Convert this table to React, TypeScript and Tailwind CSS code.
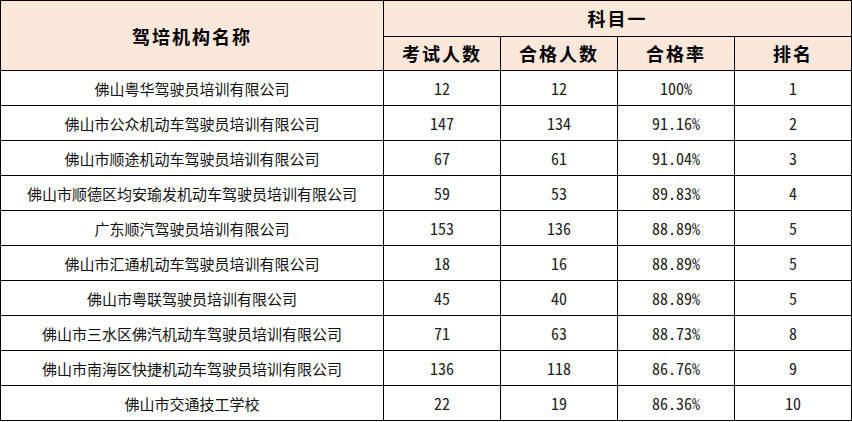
import React from "react";

const rows: [string, string, string, string, string][] = [
  ["佛山粤华驾驶员培训有限公司", "12", "12", "100%", "1"],
  ["佛山市公众机动车驾驶员培训有限公司", "147", "134", "91.16%", "2"],
  ["佛山市顺途机动车驾驶员培训有限公司", "67", "61", "91.04%", "3"],
  ["佛山市顺德区均安瑜发机动车驾驶员培训有限公司", "59", "53", "89.83%", "4"],
  ["广东顺汽驾驶员培训有限公司", "153", "136", "88.89%", "5"],
  ["佛山市汇通机动车驾驶员培训有限公司", "18", "16", "88.89%", "5"],
  ["佛山市粤联驾驶员培训有限公司", "45", "40", "88.89%", "5"],
  ["佛山市三水区佛汽机动车驾驶员培训有限公司", "71", "63", "88.73%", "8"],
  ["佛山市南海区快捷机动车驾驶员培训有限公司", "136", "118", "86.76%", "9"],
  ["佛山市交通技工学校", "22", "19", "86.36%", "10"],
];

const cjk = "font-['Noto_Sans_CJK_SC','Noto_Sans',sans-serif]";
const mono = "font-['Noto_Sans_Mono_CJK_SC','Liberation_Mono',monospace]";

export default function App() {
  return (
    <div className="w-[852px] h-[422px] bg-white">
      <div
        className={`grid grid-cols-[382px_116px_116px_116px_116px] grid-rows-[35px_33px_repeat(10,34px)] gap-px p-px bg-black w-[852px] text-black ${cjk}`}
      >
        <div className="row-span-2 bg-[#fce8da] flex items-center justify-center text-[18px] font-bold tracking-[2px] pt-px">
          驾培机构名称
        </div>
        <div className="col-span-4 bg-[#fce8da] flex items-center justify-center text-[18px] font-bold tracking-[2px]">
          科目一
        </div>
        {["考试人数", "合格人数", "合格率", "排名"].map((h) => (
          <div
            key={h}
            className="bg-[#fce8da] flex items-center justify-center text-[18px] font-bold tracking-[2px]"
          >
            {h}
          </div>
        ))}
        {rows.map((r, i) => (
          <React.Fragment key={i}>
            <div className="bg-white flex items-center justify-center text-[15px] leading-none text-[#111]">
              {r[0]}
            </div>
            {r.slice(1).map((v, j) => (
              <div
                key={j}
                className={`bg-white flex items-center justify-center text-[16px] leading-none text-[#222] ${mono}`}
              >
                {v}
              </div>
            ))}
          </React.Fragment>
        ))}
      </div>
    </div>
  );
}
